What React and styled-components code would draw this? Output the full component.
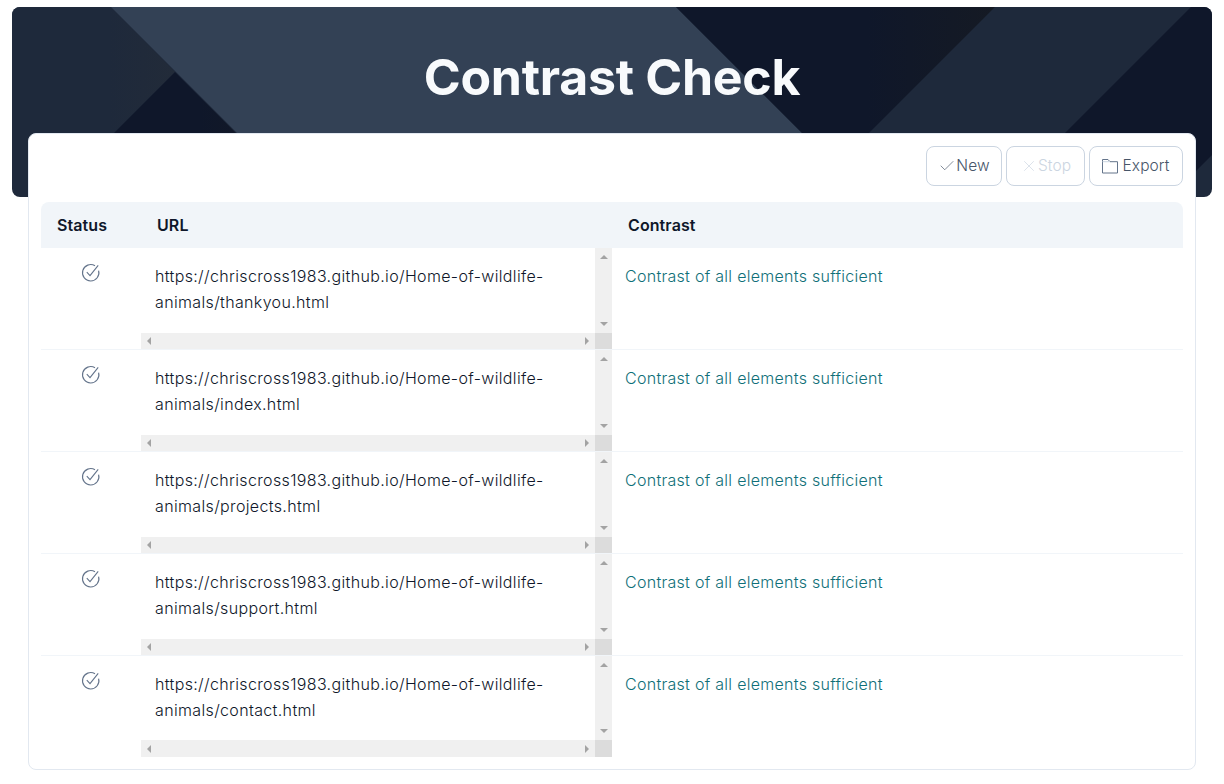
import React from "react";
import styled, { createGlobalStyle } from "styled-components";
import { Check, X } from "lucide-react";

const Global = createGlobalStyle`
  html, body {
    margin: 0;
    background: #fff;
  }
  body {
    font-family: "Inter", "Liberation Sans", sans-serif;
    overflow: hidden;
  }
`;

const Page = styled.div`
  padding: 7px 12px 0;
`;

const Hero = styled.header`
  position: relative;
  height: 190px;
  border-radius: 8px;
  overflow: hidden;
  background: #1e293b;
  text-align: center;
`;

const HeroArt = styled.svg`
  position: absolute;
  inset: 0;
  width: 100%;
  height: 100%;
`;

const Title = styled.h1`
  position: relative;
  margin: 0;
  padding-top: 37px;
  font-size: 50px;
  line-height: 66px;
  font-weight: 700;
  letter-spacing: -0.27px;
  color: #f8fafc;
`;

const Card = styled.main`
  position: relative;
  margin: -64px 16px 0;
  height: 637px;
  box-sizing: border-box;
  padding: 12px 12px 0;
  background: #fff;
  border: 1px solid #e2e8f0;
  border-radius: 8px;
`;

const Toolbar = styled.div`
  display: flex;
  justify-content: flex-end;
  gap: 4px;
  margin-bottom: 16px;
`;

const Button = styled.button`
  display: flex;
  align-items: center;
  justify-content: center;
  gap: ${(p) => p.$gap}px;
  width: ${(p) => p.$w}px;
  height: 40px;
  padding: 0 0 1px;
  font: 300 15.5px "Inter", sans-serif;
  letter-spacing: 0.1px;
  color: ${(p) => (p.disabled ? "#cbd5e1" : "#475569")};
  background: #fff;
  border: 1px solid #cbd5e1;
  border-radius: 8px;
`;

const Table = styled.div`
  display: grid;
  grid-template-columns: 100px 471px 1fr;
`;

const HeadCell = styled.div`
  height: 46px;
  padding-left: ${(p) => p.$pad}px;
  display: flex;
  align-items: center;
  font-size: 16px;
  font-weight: 600;
  letter-spacing: 0.1px;
  color: #0f172a;
  background: #f1f5f9;
  &:first-child {
    border-top-left-radius: 8px;
  }
  &:nth-child(3) {
    border-top-right-radius: 8px;
  }
`;

const Row = styled.div`
  display: grid;
  grid-column: 1 / -1;
  grid-template-columns: subgrid;
  height: 102px;
  box-sizing: border-box;
  border-bottom: 1px solid ${(p) => (p.$last ? "transparent" : "#f1f5f9")};
`;

const StatusCell = styled.div`
  display: flex;
  justify-content: center;
  padding: 15px 0 0;
  color: #64748b;
`;

const UrlBox = styled.div`
  display: grid;
  grid-template-columns: 1fr 17px;
  grid-template-rows: ${(p) => (p.$last ? "84px 17px" : "85px 16px")};
`;

const UrlText = styled.div`
  padding: 15px 0 0 14px;
  font-size: 16px;
  font-weight: 300;
  line-height: 26px;
  letter-spacing: 0.35px;
  color: #0f172a;
`;

const TrackV = styled.div`
  display: flex;
  flex-direction: column;
  justify-content: space-between;
  align-items: center;
  padding: 7px 0;
  background: #f0f0f0;
`;

const TrackH = styled.div`
  display: flex;
  justify-content: space-between;
  align-items: center;
  padding: 0 6px;
  background: #f0f0f0;
`;

const Corner = styled.div`
  background: #dcdcdc;
`;

const Arrow = styled.i`
  display: block;
  width: 0;
  height: 0;
  border: 4px solid transparent;
  ${(p) =>
    ({
      up: "border-bottom-color:#a3a3a3;border-top-width:0;",
      down: "border-top-color:#a3a3a3;border-bottom-width:0;",
      left: "border-right-color:#a3a3a3;border-left-width:0;",
      right: "border-left-color:#a3a3a3;border-right-width:0;",
    })[p.$dir]}
`;

const ContrastCell = styled.div`
  padding: 15px 0 0 13px;
  font-size: 16px;
  font-weight: 300;
  line-height: 26px;
  letter-spacing: 0.28px;
  color: #0f6f78;
`;

const CircleCheck = () => (
  <svg width="20" height="20" viewBox="0 0 20 20" fill="none" stroke="currentColor" strokeWidth="1.1">
    <path d="M17.6 7.6A8.2 8.2 0 1 1 14 2.8" />
    <path d="M5.8 9.2l3.2 3.4L17.2 2.4" />
  </svg>
);

const FolderIcon = () => (
  <svg width="16" height="16" viewBox="0 0 16 16" fill="none" stroke="#64748b" strokeWidth="1">
    <path d="M.5 15V1.5h5.5l2 2.2h7.5V15z" />
    <path d="M.5 3.7h7.5" stroke="#cbd5e1" />
  </svg>
);

const pages = ["thankyou", "index", "projects", "support", "contact"];

export default function App() {
  return (
    <>
      <Global />
      <Page>
        <Hero>
          <HeroArt viewBox="0 0 1200 190" preserveAspectRatio="none">
            <defs>
              <linearGradient id="edge" x1="0" y1="0" x2="1" y2="0">
                <stop offset="0" stopColor="#0f172a" />
                <stop offset="0.6" stopColor="#0f172a" />
                <stop offset="1" stopColor="#151a24" />
              </linearGradient>
              <linearGradient id="fade" x1="0" y1="0" x2="1" y2="0">
                <stop offset="0" stopColor="#1e293b" />
                <stop offset="0.6" stopColor="#1e293b" />
                <stop offset="1" stopColor="#222b39" />
              </linearGradient>
            </defs>
            <polygon points="0,0 99,0 163,65 101,126 0,126" fill="url(#fade)" />
            <polygon points="163,65 288,190 38,190" fill="url(#edge)" />
            <polygon points="99,0 664,0 854,190 289,190" fill="#334155" />
            <polygon points="664,0 983,0 793,190 854,190" fill="url(#edge)" />
            <polygon points="1179,0 1200,0 1200,148 1158,190 989,190" fill="#0f172a" />
          </HeroArt>
          <Title>Contrast Check</Title>
        </Hero>
        <Card>
          <Toolbar>
            <Button $w={76} $gap={0}>
              <Check size={18} strokeWidth={0.9} />
              New
            </Button>
            <Button $w={79} $gap={0} disabled>
              <X size={18} strokeWidth={0.9} />
              Stop
            </Button>
            <Button $w={94} $gap={4}>
              <FolderIcon />
              Export
            </Button>
          </Toolbar>
          <Table>
            <HeadCell $pad={16}>Status</HeadCell>
            <HeadCell $pad={16}>URL</HeadCell>
            <HeadCell $pad={16}>Contrast</HeadCell>
            {pages.map((name, i) => (
              <Row key={name} $last={i === pages.length - 1}>
                <StatusCell>
                  <CircleCheck />
                </StatusCell>
                <UrlBox $last={i === pages.length - 1}>
                  <UrlText>
                    https://chriscross1983.github.io/Home-of-wildlife-
                    <br />
                    animals/{name}.html
                  </UrlText>
                  <TrackV>
                    <Arrow $dir="up" />
                    <Arrow $dir="down" />
                  </TrackV>
                  <TrackH>
                    <Arrow $dir="left" />
                    <Arrow $dir="right" />
                  </TrackH>
                  <Corner />
                </UrlBox>
                <ContrastCell>Contrast of all elements sufficient</ContrastCell>
              </Row>
            ))}
          </Table>
        </Card>
      </Page>
    </>
  );
}
